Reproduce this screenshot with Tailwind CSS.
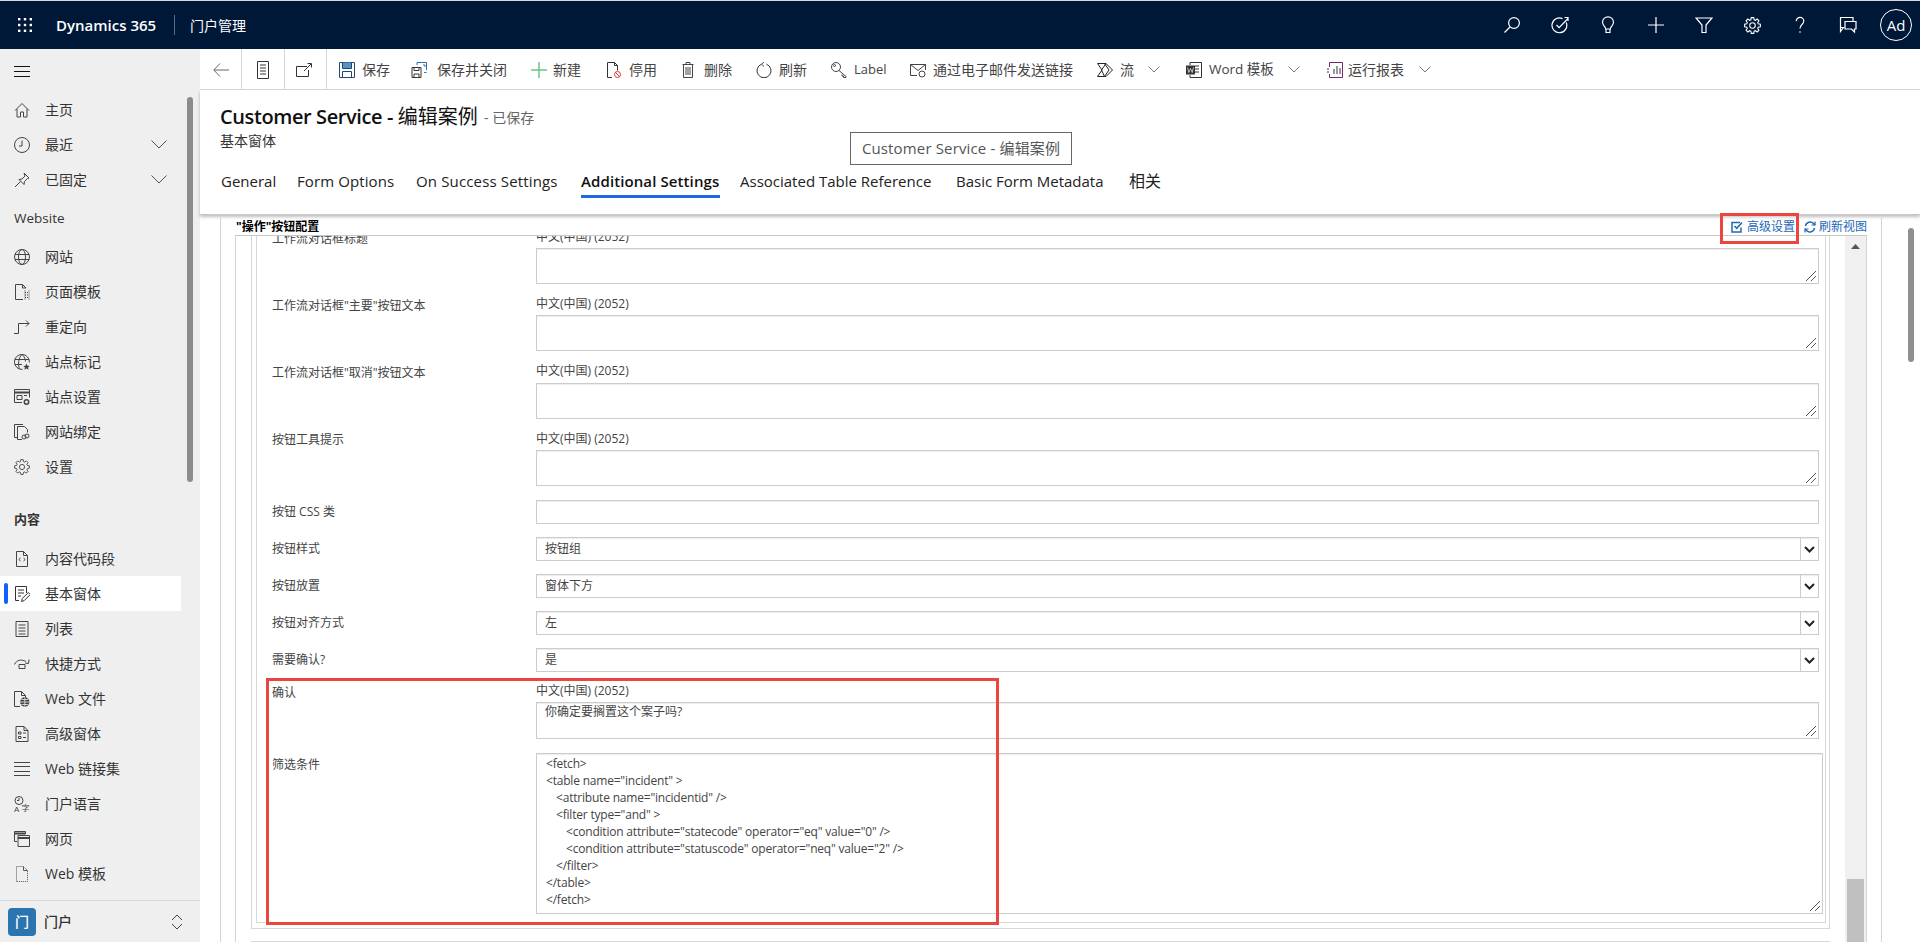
<!DOCTYPE html>
<html lang="zh-CN">
<head>
<meta charset="utf-8">
<title>Customer Service - 编辑案例</title>
<script src="https://cdn.jsdelivr.net/npm/@tailwindcss/browser@4"></script>
</head>
<body class="w-[1920px] h-[942px] overflow-hidden bg-white text-[#333] [font-family:'Open_Sans','Noto_Sans_CJK_SC',sans-serif]">

<!-- top bar -->
<header class="h-[49px] border-t border-[#d8d8d8] bg-[#001838] text-white flex items-center">
  <div class="w-[49px] flex justify-center">
    <svg width="16" height="16" viewBox="0 0 16 16" fill="#fff"><rect x="1" y="1" width="2.4" height="2.4"/><rect x="6.8" y="1" width="2.4" height="2.4"/><rect x="12.6" y="1" width="2.4" height="2.4"/><rect x="1" y="6.8" width="2.4" height="2.4"/><rect x="6.8" y="6.8" width="2.4" height="2.4"/><rect x="12.6" y="6.8" width="2.4" height="2.4"/><rect x="1" y="12.6" width="2.4" height="2.4"/><rect x="6.8" y="12.6" width="2.4" height="2.4"/><rect x="12.6" y="12.6" width="2.4" height="2.4"/></svg>
  </div>
  <div class="ml-[7px] w-[118px] text-[15px] font-semibold whitespace-nowrap">Dynamics 365</div>
  <div class="h-[20px] w-px bg-[#5a6a80]"></div>
  <div class="ml-[15px] text-[14px] whitespace-nowrap">门户管理</div>
  <div class="ml-auto flex items-center text-white">
    <div class="w-[48px] flex justify-center"><svg width="18" height="18" viewBox="0 0 18 18" fill="none" stroke="#fff" stroke-width="1.2"><circle cx="11" cy="7" r="5.4"/><path d="M7 11 1.5 16.5"/></svg></div>
    <div class="w-[48px] flex justify-center"><svg width="18" height="18" viewBox="0 0 18 18" fill="none" stroke="#fff" stroke-width="1.2"><path d="M15.2 6.5a7.4 7.4 0 1 1-3.6-3.8"/><path d="M5.5 9l2.6 2.6L17 2.5"/><path d="M13.5 1.5H17v3.5"/></svg></div>
    <div class="w-[48px] flex justify-center"><svg width="18" height="18" viewBox="0 0 18 18" fill="none" stroke="#fff" stroke-width="1.2"><path d="M6.7 13C6.5 10.500 3.500 9.500 3.500 6.300a5.500 5.500 0 0 1 11 0c0 3.200-3 4.200-3.200 6.700z"/><path d="M7 13v3.500h4V13"/></svg></div>
    <div class="w-[48px] flex justify-center"><svg width="18" height="18" viewBox="0 0 18 18" fill="none" stroke="#fff" stroke-width="1.2"><path d="M1 9h16M9 1v16"/></svg></div>
    <div class="w-[48px] flex justify-center"><svg width="18" height="18" viewBox="0 0 18 18" fill="none" stroke="#fff" stroke-width="1.2"><path d="M1 2h16l-6 7v7.500H7V9z"/></svg></div>
    <div class="w-[48px] flex justify-center"><svg width="17" height="17" viewBox="0 0 16 16" fill="none" stroke="#fff" stroke-width="1"><polygon points="6.45,2.62 6.83,0.59 9.17,0.59 9.55,2.62 10.71,3.10 12.41,1.93 14.07,3.59 12.90,5.29 13.38,6.45 15.41,6.83 15.41,9.17 13.38,9.55 12.90,10.71 14.07,12.41 12.41,14.07 10.71,12.90 9.55,13.38 9.17,15.41 6.83,15.41 6.45,13.38 5.29,12.90 3.59,14.07 1.93,12.41 3.10,10.71 2.62,9.55 0.59,9.17 0.59,6.83 2.62,6.45 3.10,5.29 1.93,3.59 3.59,1.93 5.29,3.10"/><circle cx="8" cy="8" r="2.6"/></svg></div>
    <div class="w-[48px] flex justify-center"><svg width="18" height="18" viewBox="0 0 18 18" fill="none" stroke="#fff" stroke-width="1.2"><path d="M5.200 5.200C5.200 3 7 1.400 9 1.400s3.800 1.600 3.800 3.700c0 3.300-3.800 3.600-3.800 7.400"/><path d="M9 15.200v1.500"/></svg></div>
    <div class="w-[48px] flex justify-center"><svg width="18" height="18" viewBox="0 0 18 18" fill="none" stroke="#fff" stroke-width="1.2"><path d="M5.500 11.500H1.500V1.500h12.500v3.500"/><path d="M1.500 11.500v4l3-4"/><path d="M6 5.500h11v7.500h-1.500v3l-3-3H6z"/></svg></div>
    <div class="w-[48px] h-[48px] flex items-center justify-center"><div class="w-[32px] h-[32px] rounded-full border border-white flex items-center justify-center text-[15px]">Ad</div></div>
  </div>
</header>

<div class="flex h-[893px]">
  <!-- sidebar -->
  <aside class="relative w-[200px] h-full bg-[#efefef] flex flex-col text-[14px] text-[#333] shrink-0">
    <div class="h-[43px] shrink-0 pl-[14px] flex items-center">
      <svg width="16" height="12" viewBox="0 0 16 12" fill="none" stroke="#111" stroke-width="1"><path d="M0 1.500h16M0 6.500h16M0 11.500h16"/></svg>
    </div>
    <nav class="flex-1 overflow-hidden">
      <div class="h-[35px] pl-[14px] flex items-center gap-[15px]"><svg class="w-4 h-4" viewBox="0 0 16 16" fill="none" stroke="#444"><path d="M1 8.500 8 1.500l7 7M3 7v8h3.500v-5h3v5H13V7"/></svg><span>主页</span></div>
      <div class="h-[35px] pl-[14px] flex items-center gap-[15px]"><svg class="w-4 h-4" viewBox="0 0 16 16" fill="none" stroke="#444"><circle cx="8" cy="8" r="7.500"/><path d="M8 3.500V9H5"/></svg><span>最近</span><svg class="ml-auto mr-[33px]" width="16" height="9" viewBox="0 0 16 9" fill="none" stroke="#555"><path d="M.5.500 8 8l7.500-7.500"/></svg></div>
      <div class="h-[35px] pl-[14px] flex items-center gap-[15px]"><svg class="w-4 h-4" viewBox="0 0 16 16" fill="none" stroke="#444"><path d="M10 1l5 5-1.500.5-3 3-.5 3L5 7.500l3-.5 3-3z"/><path d="M6.500 9.500 1 15"/></svg><span>已固定</span><svg class="ml-auto mr-[33px]" width="16" height="9" viewBox="0 0 16 9" fill="none" stroke="#555"><path d="M.5.500 8 8l7.500-7.500"/></svg></div>
      <div class="h-[42px] pt-[1px] pl-[14px] flex items-center font-medium text-[13.5px]">Website</div>
      <div class="h-[35px] pl-[14px] flex items-center gap-[15px]"><svg class="w-4 h-4" viewBox="0 0 16 16" fill="none" stroke="#444"><circle cx="8" cy="8" r="7.500"/><ellipse cx="8" cy="8" rx="3.500" ry="7.500"/><path d="M1 5.500h14M1 10.500h14"/></svg><span>网站</span></div>
      <div class="h-[35px] pl-[14px] flex items-center gap-[15px]"><svg class="w-4 h-4" viewBox="0 0 16 16" fill="none" stroke="#444"><path d="M9 15.500H1.500V.5h7L12 4"/><path d="M8.500.5V4H12"/><path d="M11 6.500v9M15 6.500v9M11 8.500h4M11 11h4M11 13.500h4" stroke-dasharray="1 1"/></svg><span>页面模板</span></div>
      <div class="h-[35px] pl-[14px] flex items-center gap-[15px]"><svg class="w-4 h-4" viewBox="0 0 16 16" fill="none" stroke="#444"><path d="M0 14.500h4.500v-10H15M12 1.500l3 3-3 3"/></svg><span>重定向</span></div>
      <div class="h-[35px] pl-[14px] flex items-center gap-[15px]"><svg class="w-4 h-4" viewBox="0 0 16 16" fill="none" stroke="#444"><path d="M8.500 15.400A7.500 7.500 0 1 1 15.400 8.500"/><path d="M5.500 14.500C4 12.500 4 3.500 8 .5c2.500 2 3.500 5 3.500 7M1 5.500h14M1 10.500h7"/><path d="M12.500 9.500l1 2.300 2.300.2-1.800 1.500.6 2.300-2.100-1.300-2.100 1.300.6-2.300-1.800-1.500 2.300-.2z" fill="#444" stroke="none"/></svg><span>站点标记</span></div>
      <div class="h-[35px] pl-[14px] flex items-center gap-[15px]"><svg class="w-4 h-4" viewBox="0 0 16 16" fill="none" stroke="#444"><path d="M8 13.500H.5V.5h15v8"/><path d="M.5 3.500h15" stroke-width="2"/><path d="M3 6.500h5v4H3zM10 6.500h3"/><circle cx="12.500" cy="13" r="2.200" stroke-width="1.500"/></svg><span>站点设置</span></div>
      <div class="h-[35px] pl-[14px] flex items-center gap-[15px]"><svg class="w-4 h-4" viewBox="0 0 16 16" fill="none" stroke="#444"><path d="M3 13.500H.5V.5H9"/><path d="M3.500 15.500V2.500h7l3 3v3"/><path d="M8 15.500H3.500"/><circle cx="10" cy="13" r="2"/><circle cx="13" cy="12" r="2"/></svg><span>网站绑定</span></div>
      <div class="h-[35px] pl-[14px] flex items-center gap-[15px]"><svg class="w-4 h-4" viewBox="0 0 16 16" fill="none" stroke="#444" stroke-width=".9"><polygon points="6.45,2.62 6.83,0.59 9.17,0.59 9.55,2.62 10.71,3.10 12.41,1.93 14.07,3.59 12.90,5.29 13.38,6.45 15.41,6.83 15.41,9.17 13.38,9.55 12.90,10.71 14.07,12.41 12.41,14.07 10.71,12.90 9.55,13.38 9.17,15.41 6.83,15.41 6.45,13.38 5.29,12.90 3.59,14.07 1.93,12.41 3.10,10.71 2.62,9.55 0.59,9.17 0.59,6.83 2.62,6.45 3.10,5.29 1.93,3.59 3.59,1.93 5.29,3.10"/><circle cx="8" cy="8" r="2.600"/></svg><span>设置</span></div>
      <div class="h-[57px] pt-[14px] pl-[14px] flex items-center font-bold text-[13px]">内容</div>
      <div class="h-[35px] pl-[14px] flex items-center gap-[15px]"><svg class="w-4 h-4" viewBox="0 0 16 16" fill="none" stroke="#444"><path d="M2.500 15.500V.5h7l4 4v11zM9.500.5v4h4"/><path d="M6.500 7 4.800 8.500l1.700 1.500M9.500 7l1.700 1.500L9.500 10"/></svg><span>内容代码段</span></div>
      <div class="relative w-[181px] h-[35px] pl-[14px] flex items-center gap-[15px] bg-white"><span class="absolute left-[4px] top-[7px] w-[4px] h-[21px] rounded-[2px] bg-[#0f62fe]"></span><svg class="w-4 h-4" viewBox="0 0 16 16" fill="none" stroke="#333"><path d="M5 14.500H1.500V.5h11V7"/><path d="M4 4h6M4 7h6M4 10h3"/><path d="M7.500 15.500l.8-3 6-6 2 2-6 6z"/></svg><span>基本窗体</span></div>
      <div class="h-[35px] pl-[14px] flex items-center gap-[15px]"><svg class="w-4 h-4" viewBox="0 0 16 16" fill="none" stroke="#444"><path d="M2 .5h12v15H2zM4.500 4h7M4.500 7h7M4.500 10h7M4.500 13h7"/></svg><span>列表</span></div>
      <div class="h-[35px] pl-[14px] flex items-center gap-[15px]"><svg class="w-4 h-4" viewBox="0 0 16 16" fill="none" stroke="#444"><path d="M.5 8.500C2.500 4 7 2.800 12 5.500M15 3.500l-.5 4-3.500-.5"/><path d="M5 8.500h6v4H5z"/></svg><span>快捷方式</span></div>
      <div class="h-[35px] pl-[14px] flex items-center gap-[15px]"><svg class="w-4 h-4" viewBox="0 0 16 16" fill="none" stroke="#444"><path d="M6 15.500H.5V.5h7l4 4v2M7.500.5v4h4"/><circle cx="10.800" cy="11" r="4.700" fill="#444" stroke="none"/><path d="M6 11h10M10.800 6.500v9M7.500 8.500h6.600M7.500 13.500h6.600" stroke="#efefef" stroke-width=".8"/></svg><span>Web 文件</span></div>
      <div class="h-[35px] pl-[14px] flex items-center gap-[15px]"><svg class="w-4 h-4" viewBox="0 0 16 16" fill="none" stroke="#444"><path d="M2 15.500V.5h8l4 4v11zM10 .5v4h4"/><path d="M4.500 6h2.500v2H4.500zM4.500 10.500h2.500v2H4.500zM9 7h3M9 11.500h3"/></svg><span>高级窗体</span></div>
      <div class="h-[35px] pl-[14px] flex items-center gap-[15px]"><svg class="w-4 h-4" viewBox="0 0 16 16" fill="none" stroke="#444"><path d="M0 1.500h16M0 5.500h16M0 10.500h16M0 14.500h16"/></svg><span>Web 链接集</span></div>
      <div class="h-[35px] pl-[14px] flex items-center gap-[15px]"><svg class="w-4 h-4" viewBox="0 0 16 16" fill="none" stroke="#444" font-size="8" font-family="Liberation Sans"><circle cx="5" cy="4.500" r="4"/><path d="M5 2v2.500H3"/><text x="0" y="15.500" fill="#444" stroke="none">A</text><text x="7.500" y="14.500" fill="#444" stroke="none" font-family="Noto Sans CJK SC">字</text></svg><span>门户语言</span></div>
      <div class="h-[35px] pl-[14px] flex items-center gap-[15px]"><svg class="w-4 h-4" viewBox="0 0 16 16" fill="none" stroke="#444"><path d="M3 10.500H.5V.5h11V3"/><path d="M.5 2.500h11" stroke-width="2"/><path d="M4 4.500h11.500v11H4z"/><path d="M4 7h11.500" stroke-width="2"/></svg><span>网页</span></div>
      <div class="h-[35px] pl-[14px] flex items-center gap-[15px]"><svg class="w-4 h-4" viewBox="0 0 16 16" fill="none" stroke="#555"><path d="M2.500 15.500V.5h7l4 4v11z" stroke-dasharray="1 1"/><path d="M9.500.5v4h4"/></svg><span>Web 模板</span></div>
    </nav>
    <div class="h-[42px] shrink-0 border-t border-[#d8d8d8] pl-[8px] flex items-center">
      <div class="w-[28px] h-[28px] rounded-[4px] bg-[#2a74b0] text-white flex items-center justify-center text-[14px] font-medium">门</div>
      <div class="ml-[8px] font-medium">门户</div>
      <svg class="ml-auto mr-[17px]" width="12" height="16" viewBox="0 0 12 16" fill="none" stroke="#444"><path d="M1 6l5-5 5 5M1 10l5 5 5-5"/></svg>
    </div>
    <div class="absolute left-[187px] top-[48px] w-[6px] h-[385px] rounded-[3px] bg-[#8c8c8c]"></div>
  </aside>

  <!-- main -->
  <main class="relative flex-1 h-full flex flex-col min-w-0">
    <!-- toolbar -->
    <div class="h-[41px] shrink-0 border-b border-[#d6d6d6] flex text-[14px] text-[#444] whitespace-nowrap [&>div]:pt-[1px]">
      <div class="w-[42px] border-r border-[#d6d6d6] flex items-center justify-center"><svg width="16" height="14" viewBox="0 0 16 14" fill="none" stroke="#666"><path d="M16 7H1M7 .5.800 7 7 13.500"/></svg></div>
      <div class="w-[43px] border-r border-[#d6d6d6] flex items-center justify-center"><svg width="12" height="18" viewBox="0 0 12 18" fill="none" stroke="#333"><path d="M.5.500h11v17H.5zM3 4h6M3 7h6M3 10h6M3 13h6"/></svg></div>
      <div class="w-[42px] pr-[4px] border-r border-[#d6d6d6] flex items-center justify-center"><svg width="16" height="14" viewBox="0 0 16 14" fill="none" stroke="#333"><path d="M11 3.500H.5v10h12V7"/><path d="M8 8 15 1M11.500.5H15.500V4.500"/></svg></div>

      <div class="ml-[12px] flex items-center gap-[7px]"><svg class="w-4 h-4" viewBox="0 0 16 16" fill="none" stroke="#1d4a73"><path d="M.5.500h15v15H.5z"/><path d="M3.500.5v6h9v-6" fill="#5a8fc0"/><path d="M3.500 15.500v-6h9v6"/></svg><span class="w-[28px]">保存</span></div>
      <div class="ml-[21px] flex items-center gap-[10px]"><svg class="w-4 h-4" viewBox="0 0 16 16" fill="none" stroke="#333"><path d="M1 5.500h9v10H1z"/><path d="M3 5.500v3h5v-3M3 15.500v-3.500h5v3.500"/><path d="M6 3V.5h9.500V8M13 10.500h2.500" stroke="#2a6fb0"/><path d="M12 3h2v2" stroke="#2a6fb0"/></svg><span class="w-[70px]">保存并关闭</span></div>
      <div class="ml-[24px] flex items-center gap-[6px]"><svg class="w-4 h-4" viewBox="0 0 16 16" fill="none" stroke="#6cc28c" stroke-width="1.500"><path d="M0 8h16M8 0v16"/></svg><span class="w-[29px]">新建</span></div>
      <div class="ml-[24px] flex items-center gap-[7px]"><svg class="w-4 h-4" viewBox="0 0 16 16" fill="none" stroke="#333"><path d="M6 15.500H1.500V.5h7l3 3v5M8.500.5v3h3"/><circle cx="11.500" cy="12.500" r="3" stroke="#d83b3b"/><path d="M9.500 10.500l4 4" stroke="#d83b3b"/></svg><span class="w-[28px]">停用</span></div>
      <div class="ml-[23px] flex items-center gap-[8px]"><svg class="w-4 h-4" viewBox="0 0 16 16" fill="none" stroke="#444"><path d="M2.500 2.500h11M6 2.500V.5h4v2M3.500 2.500v13h9v-13M6 5v8M8 5v8M10 5v8"/></svg><span class="w-[28px]">删除</span></div>
      <div class="ml-[24px] flex items-center gap-[7px]"><svg class="w-4 h-4" viewBox="0 0 16 16" fill="none" stroke="#333"><path d="M5.500 2.200a7 7 0 1 0 5 0"/><path d="M8 0 5.500 2.200 8 4.400" stroke-width=".9"/></svg><span class="w-[28px]">刷新</span></div>
      <div class="ml-[24px] flex items-center gap-[7px]"><svg class="w-4 h-4" viewBox="0 0 16 16" fill="none" stroke="#444"><circle cx="5" cy="5" r="4.500"/><circle cx="3.500" cy="3.500" r="1"/><path d="M8 8.500l7 6v1h-2.500v-1.500H11v-1.500"/></svg><span class="w-[32px] text-[13px]">Label</span></div>
      <div class="ml-[24px] flex items-center gap-[7px]"><svg class="w-4 h-4" viewBox="0 0 16 16" fill="none" stroke="#444"><path d="M7 13.500H.5v-11h15V8"/><path d="M.5 2.500 8 8.500l7.500-6"/><circle cx="12" cy="12" r="3"/></svg><span class="w-[141px]">通过电子邮件发送链接</span></div>
      <div class="ml-[23px] flex items-center gap-[7px]"><svg class="w-4 h-4" viewBox="0 0 16 16" fill="none" stroke="#222"><path d="M.5 1.500h8.500L4.500 8l3 6.500H.5L5 8zM9 1.500 15.500 8 9 14.500H7.500L12 8 7.500 1.500"/></svg><span class="w-[14px]">流</span></div>
      <div class="ml-[14px] flex items-center"><svg width="12" height="7" viewBox="0 0 12 7" fill="none" stroke="#777"><path d="M.5.500 6 6 11.500.5"/></svg></div>
      <div class="ml-[26px] flex items-center gap-[7px]"><svg class="w-4 h-4" viewBox="0 0 16 16" fill="none" stroke="#333"><path d="M4 3V.5h11.500v15H4V13"/><path d="M9 4h4M9 7h4M9 10h4"/><path d="M0 3.500h9v9H0z" fill="#333" stroke="none"/><path d="M1.500 5.500l1.300 5 1.700-4 1.700 4 1.300-5" stroke="#fff" stroke-width=".7"/></svg><span class="w-[65px] text-[13.500px]">Word 模板</span></div>
      <div class="ml-[14px] flex items-center"><svg width="12" height="7" viewBox="0 0 12 7" fill="none" stroke="#777"><path d="M.5.500 6 6 11.500.5"/></svg></div>
      <div class="ml-[27px] flex items-center gap-[5px]"><svg class="w-4 h-4" viewBox="0 0 16 16" fill="none" stroke="#742774"><path d="M2.500 5V.5h13v15h-13V12"/><path d="M7 12V7M10 12V4M13 12V6" stroke="#333"/><path d="M0 7h2M0 10h2" stroke="#333"/></svg><span class="w-[58px]">运行报表</span></div>
      <div class="ml-[13px] flex items-center"><svg width="12" height="7" viewBox="0 0 12 7" fill="none" stroke="#777"><path d="M.5.500 6 6 11.500.5"/></svg></div>
    </div>

    <!-- form header -->
    <div class="relative z-10 h-[125px] shrink-0 bg-white border-b border-[#c8c8c8] shadow-[0_2px_3px_rgba(0,0,0,0.25)] pl-[20px] pt-[14px] whitespace-nowrap">
      <div class="h-[26px] flex items-center">
        <span class="w-[258px] text-[20px] leading-[26px] font-semibold text-[#111] tracking-[-0.4px]">Customer Service - <span class="font-normal tracking-normal">编辑案例</span></span>
        <span class="ml-[6px] text-[14px] text-[#666]">- 已保存</span>
      </div>
      <div class="h-[20px] mt-[1px] text-[14px] leading-[20px] text-[#333]">基本窗体</div>
      <div class="mt-[13px] h-[34px] flex text-[15px] leading-[34px] text-[#222]">
        <span class="w-[54px] ml-[1px]">General</span>
        <span class="w-[97px] ml-[22px] tracking-[0.1px]">Form Options</span>
        <span class="w-[142px] ml-[22px] tracking-[0.15px]">On Success Settings</span>
        <span class="w-[139px] ml-[23px] font-semibold tracking-[0.1px] shadow-[inset_0_-3px_0_#2266e3] text-[#111]">Additional Settings</span>
        <span class="w-[190px] ml-[20px]">Associated Table Reference</span>
        <span class="w-[148px] ml-[26px]">Basic Form Metadata</span>
        <span class="w-[32px] ml-[25px] text-[16px]">相关</span>
      </div>
    </div>

    <!-- content -->
    <div class="flex-1 min-h-0 overflow-hidden pt-[3px] pl-[20px]">
      <div class="w-[1662px] h-full border-x border-[#d4d4d4] pl-[14px]">
        <div class="w-[1632px] h-full flex flex-col">
          <div class="h-[18px] shrink-0 border-b border-[#c8c8c8] flex items-center pl-[1px] text-[12px] whitespace-nowrap">
            <span class="font-bold text-black">"操作"按钮配置</span>
            <span class="ml-auto flex items-center text-[#2268b5]">
              <svg width="12" height="12" viewBox="0 0 12 12" fill="none" stroke="#2268b5" stroke-width="1.500"><path d="M10 6.500V11H1V1.500h8"/><path d="M3.500 5l2.200 2.300L11 1.500"/></svg>
              <span class="ml-[4px] w-[48px]">高级设置</span>
              <svg class="ml-[9px]" width="12" height="12" viewBox="0 0 12 12" fill="none" stroke="#2268b5" stroke-width="1.500"><path d="M1.500 5a4.700 4.700 0 0 1 8-2.500L11 4M10.500 7a4.700 4.700 0 0 1-8 2.500L1 8"/><path d="M11 .5V4H7.500M1 11.500V8h3.500" stroke-width="1.200"/></svg>
              <span class="ml-[3px] w-[48px]">刷新视图</span>
            </span>
          </div>
          <div class="flex-1 min-h-0 flex overflow-hidden">
            <div class="w-[1610px] h-full border-l border-[#d4d4d4] pl-[15px]">
              <div class="w-[1579px] h-[693px] border-x border-b border-[#d8d8d8] pl-[4px]">
                <div class="w-[1570px] h-[687px] border-x border-b border-[#d8d8d8] pl-[15px] overflow-hidden text-[12px] text-[#444] whitespace-nowrap">

                  <div class="-mt-[8px] flex">
                    <div class="w-[264px] pt-[2px]">工作流对话框标题</div>
                    <div class="w-[1283px]"><div class="h-[17px] leading-[17px]">中文(中国) (2052)</div>
                      <div class="relative mt-[3px] h-[36px] border border-[#ccc] shadow-[inset_0_1px_1px_rgba(0,0,0,0.075)]"><svg class="absolute right-[2px] bottom-[2px]" width="10" height="10" viewBox="0 0 10 10" fill="none" stroke="#555"><path d="M0 10 10 0M5 10l5-5"/></svg></div></div>
                  </div>
                  <div class="mt-[11px] flex">
                    <div class="w-[264px] pt-[2px]">工作流对话框"主要"按钮文本</div>
                    <div class="w-[1283px]"><div class="h-[17px] leading-[17px]">中文(中国) (2052)</div>
                      <div class="relative mt-[3px] h-[36px] border border-[#ccc] shadow-[inset_0_1px_1px_rgba(0,0,0,0.075)]"><svg class="absolute right-[2px] bottom-[2px]" width="10" height="10" viewBox="0 0 10 10" fill="none" stroke="#555"><path d="M0 10 10 0M5 10l5-5"/></svg></div></div>
                  </div>
                  <div class="mt-[11px] flex">
                    <div class="w-[264px] pt-[2px]">工作流对话框"取消"按钮文本</div>
                    <div class="w-[1283px]"><div class="h-[17px] leading-[17px]">中文(中国) (2052)</div>
                      <div class="relative mt-[4px] h-[36px] border border-[#ccc] shadow-[inset_0_1px_1px_rgba(0,0,0,0.075)]"><svg class="absolute right-[2px] bottom-[2px]" width="10" height="10" viewBox="0 0 10 10" fill="none" stroke="#555"><path d="M0 10 10 0M5 10l5-5"/></svg></div></div>
                  </div>
                  <div class="mt-[11px] flex">
                    <div class="w-[264px] pt-[1px]">按钮工具提示</div>
                    <div class="w-[1283px]"><div class="h-[17px] leading-[17px]">中文(中国) (2052)</div>
                      <div class="relative mt-[3px] h-[36px] border border-[#ccc] shadow-[inset_0_1px_1px_rgba(0,0,0,0.075)]"><svg class="absolute right-[2px] bottom-[2px]" width="10" height="10" viewBox="0 0 10 10" fill="none" stroke="#555"><path d="M0 10 10 0M5 10l5-5"/></svg></div></div>
                  </div>

                  <div class="mt-[14px] flex items-center h-[24px]">
                    <div class="w-[264px]">按钮 CSS 类</div>
                    <div class="w-[1283px] h-full border border-[#ccc] shadow-[inset_0_1px_1px_rgba(0,0,0,0.075)]"></div>
                  </div>
                  <div class="mt-[13px] flex items-center h-[24px]">
                    <div class="w-[264px]">按钮样式</div>
                    <div class="w-[1283px] h-full border border-[#ccc] shadow-[inset_0_1px_1px_rgba(0,0,0,0.075)] pl-[8px] flex items-center"><span>按钮组</span><span class="ml-auto w-[18px] h-full border-l border-[#ccc] flex items-center justify-center"><svg width="11" height="7" viewBox="0 0 11 7" fill="none" stroke="#222" stroke-width="2"><path d="M1 1l4.500 4.500L10 1"/></svg></span></div>
                  </div>
                  <div class="mt-[13px] flex items-center h-[24px]">
                    <div class="w-[264px]">按钮放置</div>
                    <div class="w-[1283px] h-full border border-[#ccc] shadow-[inset_0_1px_1px_rgba(0,0,0,0.075)] pl-[8px] flex items-center"><span>窗体下方</span><span class="ml-auto w-[18px] h-full border-l border-[#ccc] flex items-center justify-center"><svg width="11" height="7" viewBox="0 0 11 7" fill="none" stroke="#222" stroke-width="2"><path d="M1 1l4.500 4.500L10 1"/></svg></span></div>
                  </div>
                  <div class="mt-[13px] flex items-center h-[24px]">
                    <div class="w-[264px]">按钮对齐方式</div>
                    <div class="w-[1283px] h-full border border-[#ccc] shadow-[inset_0_1px_1px_rgba(0,0,0,0.075)] pl-[8px] flex items-center"><span>左</span><span class="ml-auto w-[18px] h-full border-l border-[#ccc] flex items-center justify-center"><svg width="11" height="7" viewBox="0 0 11 7" fill="none" stroke="#222" stroke-width="2"><path d="M1 1l4.500 4.500L10 1"/></svg></span></div>
                  </div>
                  <div class="mt-[13px] flex items-center h-[24px]">
                    <div class="w-[264px]">需要确认?</div>
                    <div class="w-[1283px] h-full border border-[#ccc] shadow-[inset_0_1px_1px_rgba(0,0,0,0.075)] pl-[8px] flex items-center"><span>是</span><span class="ml-auto w-[18px] h-full border-l border-[#ccc] flex items-center justify-center"><svg width="11" height="7" viewBox="0 0 11 7" fill="none" stroke="#222" stroke-width="2"><path d="M1 1l4.500 4.500L10 1"/></svg></span></div>
                  </div>

                  <div class="mt-[10px] flex">
                    <div class="w-[264px] pt-[2px]">确认</div>
                    <div class="w-[1283px]"><div class="h-[17px] leading-[17px]">中文(中国) (2052)</div>
                      <div class="relative mt-[3px] h-[37px] border border-[#ccc] shadow-[inset_0_1px_1px_rgba(0,0,0,0.075)] pl-[8px] leading-[17px]">你确定要搁置这个案子吗?<svg class="absolute right-[2px] bottom-[2px]" width="10" height="10" viewBox="0 0 10 10" fill="none" stroke="#555"><path d="M0 10 10 0M5 10l5-5"/></svg></div></div>
                  </div>
                  <div class="mt-[14px] flex">
                    <div class="w-[264px] pt-[3px]">筛选条件</div>
                    <div class="relative w-[1287px] h-[161px] border border-[#ccc] shadow-[inset_0_1px_1px_rgba(0,0,0,0.075)] pl-[9px] pt-[1px] leading-[17px] tracking-[-0.2px]">
                      <div>&lt;fetch&gt;</div>
                      <div>&lt;table name="incident" &gt;</div>
                      <div class="pl-[10px]">&lt;attribute name="incidentid" /&gt;</div>
                      <div class="pl-[10px]">&lt;filter type="and" &gt;</div>
                      <div class="pl-[20px]">&lt;condition attribute="statecode" operator="eq" value="0" /&gt;</div>
                      <div class="pl-[20px]">&lt;condition attribute="statuscode" operator="neq" value="2" /&gt;</div>
                      <div class="pl-[10px]">&lt;/filter&gt;</div>
                      <div>&lt;/table&gt;</div>
                      <div>&lt;/fetch&gt;</div>
                      <svg class="absolute right-[2px] bottom-[2px]" width="10" height="10" viewBox="0 0 10 10" fill="none" stroke="#555"><path d="M0 10 10 0M5 10l5-5"/></svg>
                    </div>
                  </div>
                </div>
              </div>
              <div class="mt-[12px] w-[1579px] border-t border-[#d8d8d8]"></div>
            </div>
            <div class="w-[22px] h-full bg-[#f0f0f0] border-r border-[#d4d4d4] flex flex-col items-center">
              <svg class="mt-[8px]" width="9" height="5" viewBox="0 0 9 5" fill="#555"><path d="M4.500 0 9 5H0z"/></svg>
              <div class="mt-auto w-[17px] h-[63px] bg-[#c0c0c0]"></div>
            </div>
          </div>
        </div>
      </div>
    </div>

    <!-- overlays -->
    <div class="absolute left-[650px] top-[83px] z-20 w-[222px] h-[33px] bg-white border border-[#666] flex items-center justify-center text-[15px] text-[#555] whitespace-nowrap tracking-[0.15px]">Customer Service - 编辑案例</div>
    <div class="absolute left-[1520px] top-[164px] z-20 w-[79px] h-[31px] border-[3px] border-[#ea4540]"></div>
    <div class="absolute left-[66px] top-[629px] z-20 w-[733px] h-[247px] border-[3px] border-[#ea4540]"></div>
    <div class="absolute left-[1708px] top-[179px] w-[6px] h-[134px] rounded-[3px] bg-[#8f8f8f]"></div>
  </main>
</div>
</body>
</html>
